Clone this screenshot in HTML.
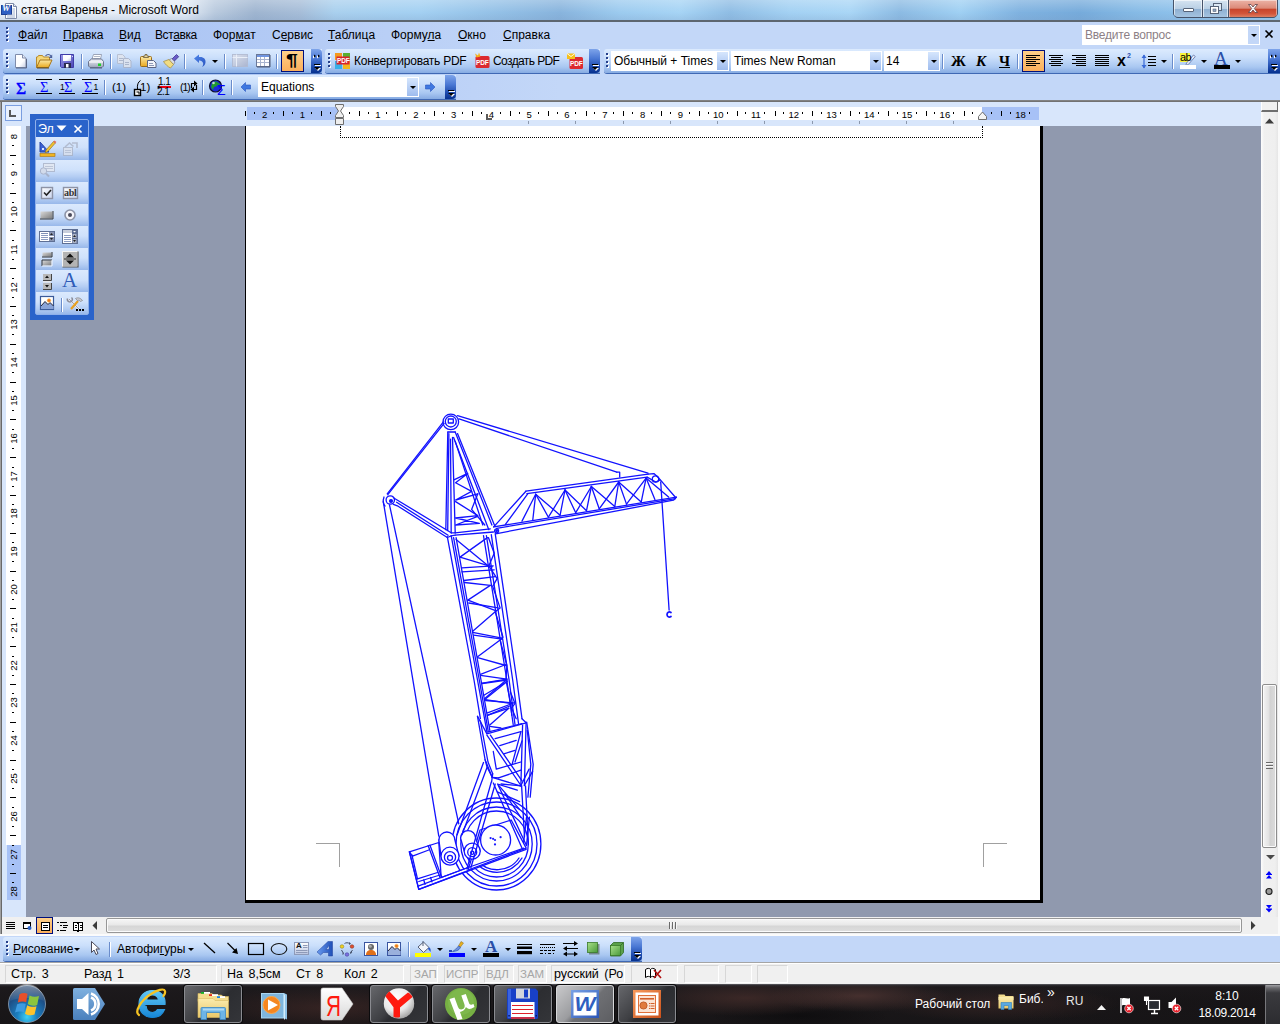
<!DOCTYPE html><html><head><meta charset="utf-8"><title>Word</title><style>
*{margin:0;padding:0;box-sizing:border-box}
html,body{width:1280px;height:1024px;overflow:hidden;background:#c3d7f8;font-family:"Liberation Sans",sans-serif;font-size:12px;color:#000}
.a{position:absolute}
.t{position:absolute;white-space:nowrap;line-height:14px;height:14px}
u{text-decoration:underline;text-underline-offset:1px}
.tb{position:absolute;height:25px;border-radius:3px 0 0 3px;background:linear-gradient(#dcebfe 0,#cbdffb 35%,#a9c7f1 75%,#86abe2 100%);box-shadow:0 1px 0 #3f68b4}
.cap{position:absolute;top:0;width:11px;height:25px;border-radius:0 4px 4px 0;background:linear-gradient(#7ea4ea 0,#4a78d4 40%,#1d4aac 75%,#06318f 100%)}
.grip{position:absolute;left:3px;top:4px;width:3px;height:16px;background:linear-gradient(#27408b 0 2px,transparent 2px 4px) 0 0/2px 4px repeat-y,linear-gradient(#fff 0 2px,transparent 2px 4px) 1px 1px/2px 4px repeat-y}
.sep{position:absolute;top:5px;width:2px;height:15px;border-left:1px solid #6a8ccb;border-right:1px solid #fff}
.cb{position:absolute;background:#fff;height:20px;top:2px}
.dd{position:absolute;top:1px;right:1px;width:11px;height:18px;background:linear-gradient(#d6e6fd,#9ebcee)}
.dd:after,.arr:after{content:"";position:absolute;left:3px;top:8px;border:3px solid transparent;border-top:3px solid #000;border-bottom:0;width:0;height:0}
.arr{position:absolute;width:7px;height:4px}
.arr:after{left:0;top:0}
.sel{position:absolute;background:linear-gradient(#fed08a,#fbaf5c);border:1px solid #00107c}
</style></head><body>
<div class="a" style="left:0;top:0;width:1280px;height:21px;background:linear-gradient(90deg,#edf2f9 0,#e4ecf6 185px,#b9cade 215px,#9fb5d0 255px,#a6bdd8 300px,#a9d0ee 335px,#a3d0f2 420px,#93c0e6 500px,#88b4dd 560px,#9ccbef 620px,#a6d4f5 680px,#8fbde4 730px,#a3d1f3 790px,#a9d6f6 850px,#8cbbe3 900px,#9fd0f3 960px,#7fb2e0 1020px,#76abdb 1080px,#86bbe6 1140px,#8cc0ea 1170px,#9ccdf1 1280px)"></div>
<div class="a" style="left:0;top:0;width:1280px;height:21px;background:linear-gradient(rgba(255,255,255,.25),rgba(255,255,255,0) 60%,rgba(120,150,190,.25))"></div>
<div class="a" style="left:0;top:20px;width:1280px;height:2px;background:#5d6670"></div>
<div class="t" style="left:21px;top:3px;font-size:12px">статья Варенья - Microsoft Word</div>
<svg class="a" style="left:1px;top:2px" width="17" height="18"><path d="M4.500 1.500h8l3 3v12h-11z" fill="#fff" stroke="#7c8aa8"/><path d="M12.500 1.500v3h3" fill="#dfe6f4" stroke="#7c8aa8"/><rect x="0.500" y="3.500" width="10" height="9" fill="#2f5fc4" stroke="#1c3f94"/><path d="M6 13h8M6 15h8M11.500 7h2.500M11.500 9h2.500M11.500 11h2.500" stroke="#9fb0d0" stroke-width="1"/></svg>
<div class="t" style="left:2px;top:4px;font:bold italic 9px 'Liberation Serif',serif;line-height:9px;height:9px;color:#fff">W</div>
<div class="a" style="left:1173px;top:-1px;width:105px;height:19px;border:1px solid #46536a;border-radius:0 0 5px 5px;background:#46536a;overflow:hidden"><div class="a" style="left:0;top:0;width:28px;height:18px;background:linear-gradient(#d6e4f1 0,#b9cfe4 48%,#8fb0d2 52%,#a8c6e2 100%);box-shadow:inset 0 0 0 1px rgba(255,255,255,.6)"></div><div class="a" style="left:29px;top:0;width:25px;height:18px;background:linear-gradient(#d6e4f1 0,#b9cfe4 48%,#8fb0d2 52%,#a8c6e2 100%);box-shadow:inset 0 0 0 1px rgba(255,255,255,.6)"></div><div class="a" style="left:55px;top:0;width:48px;height:18px;background:linear-gradient(#ecb3a6 0,#dc8a78 45%,#c8452c 52%,#d2553a 75%,#e08a6c 100%);box-shadow:inset 0 0 0 1px rgba(255,255,255,.45)"></div></div>
<svg class="a" style="left:1174px;top:0" width="104" height="18"><rect x="9.500" y="8.500" width="10" height="3" rx=".5" fill="#fff" stroke="#566378"/><rect x="39.500" y="3.500" width="8" height="7" fill="#dbe7f3" stroke="#566378"/><rect x="36.500" y="6.500" width="8" height="7" fill="#fff" stroke="#566378"/><rect x="39" y="9" width="3" height="2.500" fill="#8fa6c2" stroke="#566378" stroke-width=".6"/><path d="M74.500 4.500l2.500 0 2 2.500 2-2.500 2.500 0-3.200 4 3.200 4-2.500 0-2-2.500-2 2.500-2.500 0 3.200-4z" fill="#fff" stroke="#5a4048" stroke-width=".8"/></svg>
<div class="a" style="left:0;top:22px;width:1280px;height:79px;background:linear-gradient(90deg,#a4c0f3 0,#b4cbf5 300px,#c3d7f8 560px,#c3d7f8 100%)"></div>
<div class="a" style="left:0;top:100px;width:1280px;height:2px;background:linear-gradient(#8a8a8a,#6a6a6a)"></div>
<div class="a" style="left:0;top:102px;width:1280px;height:24px;background:#d8e6fb"></div>
<div class="a" style="left:0;top:126px;width:26px;height:791px;background:#d8e6fb"></div>
<div class="a" style="left:26px;top:126px;width:1235px;height:791px;background:#9099ae"></div>
<div class="a" style="left:245px;top:126px;width:798px;height:777px;background:#000"></div>
<div class="a" style="left:246px;top:126px;width:794px;height:774px;background:#fff"></div>
<div class="a" style="left:0;top:102px;width:2px;height:832px;background:linear-gradient(90deg,#a0a0a0 0 1px,#696969 1px 2px)"></div>
<div class="a" style="left:2px;top:917px;width:1278px;height:17px;background:#f0f0f0"></div>
<div class="a" style="left:1261px;top:102px;width:19px;height:832px;background:#f0f0f0"></div>
<div class="a" style="left:0;top:934px;width:1280px;height:2px;background:#fbfbfb"></div>
<div class="a" style="left:0;top:936px;width:1280px;height:26px;background:#c3d7f8"></div>
<div class="a" style="left:0;top:962px;width:1280px;height:1px;background:#a5a5a5"></div>
<div class="a" style="left:0;top:963px;width:1280px;height:21px;background:#f0f0f0"></div>
<div class="a" style="left:0;top:984px;width:1280px;height:40px;background:#121318"></div>
<div class="a" style="left:6px;top:27px;width:3px;height:16px"><div class="grip" style="left:0;top:0"></div></div>
<div class="t" style="left:18px;top:28px"><u>Ф</u>айл</div>
<div class="t" style="left:63px;top:28px"><u>П</u>равка</div>
<div class="t" style="left:119px;top:28px"><u>В</u>ид</div>
<div class="t" style="left:155px;top:28px"><span style="letter-spacing:-0.4px">Вст<u>а</u>вка</span></div>
<div class="t" style="left:213px;top:28px">Фор<u>м</u>ат</div>
<div class="t" style="left:272px;top:28px">С<u>е</u>рвис</div>
<div class="t" style="left:328px;top:28px"><u>Т</u>аблица</div>
<div class="t" style="left:391px;top:28px">Форму<u>л</u>а</div>
<div class="t" style="left:458px;top:28px"><u>О</u>кно</div>
<div class="t" style="left:503px;top:28px"><u>С</u>правка</div>
<div class="a" style="left:1082px;top:25px;width:178px;height:20px;background:#fff"><div class="dd" style="top:1px;right:1px;height:18px;background:#c3d7f8"></div></div>
<div class="t" style="left:1085px;top:28px;color:#8c7f86;letter-spacing:-0.2px">Введите вопрос</div>
<svg class="a" style="left:1264px;top:29px" width="10" height="10"><path d="M1.5 1.5l7 7M8.5 1.5l-7 7" stroke="#000" stroke-width="1.6" fill="none"/></svg>
<div class="tb" style="left:3px;top:49px;width:319px;height:24px"><div class="grip"></div><div class="cap" style="left:308px;height:24px"></div><div class="sep" style="left:78px"></div><div class="sep" style="left:107px"></div><div class="sep" style="left:181px"></div><div class="sep" style="left:221px"></div><div class="sep" style="left:273px"></div><div class="sel" style="left:278px;top:1px;width:23px;height:22px"></div><div class="arr" style="left:209px;top:11px"></div></div>
<div class="tb" style="left:325px;top:49px;width:275px;height:24px"><div class="grip"></div><div class="cap" style="left:264px;height:24px"></div></div>
<div class="t" style="left:354px;top:54px;letter-spacing:-0.25px">Конвертировать PDF</div>
<div class="t" style="left:493px;top:54px;letter-spacing:-0.6px">Создать PDF</div>
<div class="tb" style="left:604px;top:49px;width:676px;height:24px"><div class="grip" style="left:2px"></div><div class="cap" style="left:664px;width:12px;height:24px;border-radius:0"></div><div class="cb" style="left:7px;width:118px"><div class="dd"></div></div><div class="cb" style="left:127px;width:151px"><div class="dd"></div></div><div class="cb" style="left:280px;width:56px"><div class="dd"></div></div><div class="sep" style="left:338px"></div><div class="sep" style="left:413px"></div><div class="sep" style="left:568px"></div><div class="sel" style="left:418px;top:1px;width:23px;height:22px"></div><div class="arr" style="left:557px;top:11px"></div><div class="arr" style="left:597px;top:11px"></div><div class="arr" style="left:631px;top:11px"></div></div>
<div class="t" style="left:614px;top:54px;width:102px;overflow:hidden">Обычный + Times</div>
<div class="t" style="left:734px;top:54px">Times New Roman</div>
<div class="t" style="left:886px;top:54px">14</div>
<div class="t" style="left:951px;top:53px;font:bold 15px 'Liberation Serif',serif;line-height:16px">Ж</div>
<div class="t" style="left:976px;top:53px;font:italic bold 15px 'Liberation Serif',serif;line-height:16px">К</div>
<div class="t" style="left:999px;top:53px;font:bold 15px 'Liberation Serif',serif;line-height:16px;text-decoration:underline">Ч</div>
<div class="tb" style="left:3px;top:75px;width:453px;height:24px"><div class="grip"></div><div class="cap" style="left:442px;height:24px"></div><div class="sep" style="left:101px"></div><div class="sep" style="left:199px"></div><div class="sep" style="left:228px"></div><div class="cb" style="left:255px;width:161px"><div class="dd"></div></div></div>
<div class="t" style="left:261px;top:80px">Equations</div>
<div class="a" style="left:5px;top:105px;width:17px;height:16px;border:1px solid #7a9ee0;background:#e8f0fd"></div>
<svg class="a" style="left:9px;top:110px" width="9" height="9"><path d="M1 0v6h6" stroke="#585858" stroke-width="2" fill="none"/></svg>
<div class="a" style="left:247px;top:107px;width:792px;height:13px;background:#a7c1f6"></div>
<div class="a" style="left:340px;top:107px;width:642px;height:13px;background:#fff"></div>
<svg class="a" style="left:0;top:102px" width="1280" height="24" shape-rendering="crispEdges"><rect x="245" y="9" width="1" height="5" fill="#000"/><rect x="254" y="10" width="1" height="2" fill="#000"/><rect x="273" y="10" width="1" height="2" fill="#000"/><rect x="283" y="9" width="1" height="5" fill="#000"/><rect x="292" y="10" width="1" height="2" fill="#000"/><rect x="311" y="10" width="1" height="2" fill="#000"/><rect x="321" y="9" width="1" height="5" fill="#000"/><rect x="330" y="10" width="1" height="2" fill="#000"/><rect x="349" y="10" width="1" height="2" fill="#000"/><rect x="359" y="9" width="1" height="5" fill="#000"/><rect x="368" y="10" width="1" height="2" fill="#000"/><rect x="386" y="10" width="1" height="2" fill="#000"/><rect x="397" y="9" width="1" height="5" fill="#000"/><rect x="405" y="10" width="1" height="2" fill="#000"/><rect x="424" y="10" width="1" height="2" fill="#000"/><rect x="434" y="9" width="1" height="5" fill="#000"/><rect x="443" y="10" width="1" height="2" fill="#000"/><rect x="462" y="10" width="1" height="2" fill="#000"/><rect x="472" y="9" width="1" height="5" fill="#000"/><rect x="481" y="10" width="1" height="2" fill="#000"/><rect x="500" y="10" width="1" height="2" fill="#000"/><rect x="510" y="9" width="1" height="5" fill="#000"/><rect x="519" y="10" width="1" height="2" fill="#000"/><rect x="538" y="10" width="1" height="2" fill="#000"/><rect x="548" y="9" width="1" height="5" fill="#000"/><rect x="557" y="10" width="1" height="2" fill="#000"/><rect x="575" y="10" width="1" height="2" fill="#000"/><rect x="586" y="9" width="1" height="5" fill="#000"/><rect x="594" y="10" width="1" height="2" fill="#000"/><rect x="613" y="10" width="1" height="2" fill="#000"/><rect x="623" y="9" width="1" height="5" fill="#000"/><rect x="632" y="10" width="1" height="2" fill="#000"/><rect x="651" y="10" width="1" height="2" fill="#000"/><rect x="661" y="9" width="1" height="5" fill="#000"/><rect x="670" y="10" width="1" height="2" fill="#000"/><rect x="689" y="10" width="1" height="2" fill="#000"/><rect x="699" y="9" width="1" height="5" fill="#000"/><rect x="708" y="10" width="1" height="2" fill="#000"/><rect x="727" y="10" width="1" height="2" fill="#000"/><rect x="737" y="9" width="1" height="5" fill="#000"/><rect x="745" y="10" width="1" height="2" fill="#000"/><rect x="764" y="10" width="1" height="2" fill="#000"/><rect x="775" y="9" width="1" height="5" fill="#000"/><rect x="783" y="10" width="1" height="2" fill="#000"/><rect x="802" y="10" width="1" height="2" fill="#000"/><rect x="812" y="9" width="1" height="5" fill="#000"/><rect x="821" y="10" width="1" height="2" fill="#000"/><rect x="840" y="10" width="1" height="2" fill="#000"/><rect x="850" y="9" width="1" height="5" fill="#000"/><rect x="859" y="10" width="1" height="2" fill="#000"/><rect x="878" y="10" width="1" height="2" fill="#000"/><rect x="888" y="9" width="1" height="5" fill="#000"/><rect x="897" y="10" width="1" height="2" fill="#000"/><rect x="916" y="10" width="1" height="2" fill="#000"/><rect x="926" y="9" width="1" height="5" fill="#000"/><rect x="934" y="10" width="1" height="2" fill="#000"/><rect x="953" y="10" width="1" height="2" fill="#000"/><rect x="964" y="9" width="1" height="5" fill="#000"/><rect x="972" y="10" width="1" height="2" fill="#000"/><rect x="991" y="10" width="1" height="2" fill="#000"/><rect x="1001" y="9" width="1" height="5" fill="#000"/><rect x="1010" y="10" width="1" height="2" fill="#000"/><rect x="1029" y="10" width="1" height="2" fill="#000"/><rect x="528" y="19" width="1" height="3" fill="#8c98ad"/><rect x="575" y="19" width="1" height="3" fill="#8c98ad"/><rect x="623" y="19" width="1" height="3" fill="#8c98ad"/><rect x="670" y="19" width="1" height="3" fill="#8c98ad"/><rect x="717" y="19" width="1" height="3" fill="#8c98ad"/><rect x="764" y="19" width="1" height="3" fill="#8c98ad"/><rect x="812" y="19" width="1" height="3" fill="#8c98ad"/><rect x="859" y="19" width="1" height="3" fill="#8c98ad"/><rect x="906" y="19" width="1" height="3" fill="#8c98ad"/><rect x="953" y="19" width="1" height="3" fill="#8c98ad"/></svg>
<div class="t" style="left:254.6px;top:107.5px;width:20px;text-align:center;font-size:9.5px;line-height:13px;height:13px">2</div>
<div class="t" style="left:292.4px;top:107.5px;width:20px;text-align:center;font-size:9.5px;line-height:13px;height:13px">1</div>
<div class="t" style="left:368.0px;top:107.5px;width:20px;text-align:center;font-size:9.5px;line-height:13px;height:13px">1</div>
<div class="t" style="left:405.8px;top:107.5px;width:20px;text-align:center;font-size:9.5px;line-height:13px;height:13px">2</div>
<div class="t" style="left:443.6px;top:107.5px;width:20px;text-align:center;font-size:9.5px;line-height:13px;height:13px">3</div>
<div class="t" style="left:481.4px;top:107.5px;width:20px;text-align:center;font-size:9.5px;line-height:13px;height:13px">4</div>
<div class="t" style="left:519.2px;top:107.5px;width:20px;text-align:center;font-size:9.5px;line-height:13px;height:13px">5</div>
<div class="t" style="left:557.0px;top:107.5px;width:20px;text-align:center;font-size:9.5px;line-height:13px;height:13px">6</div>
<div class="t" style="left:594.8px;top:107.5px;width:20px;text-align:center;font-size:9.5px;line-height:13px;height:13px">7</div>
<div class="t" style="left:632.6px;top:107.5px;width:20px;text-align:center;font-size:9.5px;line-height:13px;height:13px">8</div>
<div class="t" style="left:670.4px;top:107.5px;width:20px;text-align:center;font-size:9.5px;line-height:13px;height:13px">9</div>
<div class="t" style="left:708.2px;top:107.5px;width:20px;text-align:center;font-size:9.5px;line-height:13px;height:13px">10</div>
<div class="t" style="left:745.9px;top:107.5px;width:20px;text-align:center;font-size:9.5px;line-height:13px;height:13px">11</div>
<div class="t" style="left:783.7px;top:107.5px;width:20px;text-align:center;font-size:9.5px;line-height:13px;height:13px">12</div>
<div class="t" style="left:821.5px;top:107.5px;width:20px;text-align:center;font-size:9.5px;line-height:13px;height:13px">13</div>
<div class="t" style="left:859.3px;top:107.5px;width:20px;text-align:center;font-size:9.5px;line-height:13px;height:13px">14</div>
<div class="t" style="left:897.1px;top:107.5px;width:20px;text-align:center;font-size:9.5px;line-height:13px;height:13px">15</div>
<div class="t" style="left:934.9px;top:107.5px;width:20px;text-align:center;font-size:9.5px;line-height:13px;height:13px">16</div>
<div class="t" style="left:1010.5px;top:107.5px;width:20px;text-align:center;font-size:9.5px;line-height:13px;height:13px">18</div>
<svg class="a" style="left:334px;top:103px" width="12" height="24"><path d="M1.5 1.5h8v2l-3 4.5 3 4.5v2h-8v-2l3-4.5-3-4.5z M1.5 15.5h8v6h-8z" fill="#eee" stroke="#6e6e6e" stroke-width="1"/></svg>
<svg class="a" style="left:977px;top:110px" width="12" height="12"><path d="M1.5 9.5v-3l4-4.5 4 4.5v3z" fill="#f4f4f4" stroke="#6e6e6e" stroke-width="1"/></svg>
<svg class="a" style="left:486px;top:114px" width="7" height="7"><path d="M1 0v5h5" stroke="#5a5a5a" stroke-width="2" fill="none"/></svg>
<div class="a" style="left:6px;top:126px;width:15px;height:719px;background:#fff"></div>
<div class="a" style="left:7px;top:845px;width:14px;height:55px;background:#a7c1f6"></div>
<svg class="a" style="left:0;top:126px" width="26" height="791" shape-rendering="crispEdges"><rect x="12" y="19" width="2" height="1" fill="#000"/><rect x="10" y="29" width="6" height="1" fill="#000"/><rect x="12" y="38" width="2" height="1" fill="#000"/><rect x="12" y="57" width="2" height="1" fill="#000"/><rect x="10" y="67" width="6" height="1" fill="#000"/><rect x="12" y="76" width="2" height="1" fill="#000"/><rect x="12" y="95" width="2" height="1" fill="#000"/><rect x="10" y="104" width="6" height="1" fill="#000"/><rect x="12" y="114" width="2" height="1" fill="#000"/><rect x="12" y="133" width="2" height="1" fill="#000"/><rect x="10" y="142" width="6" height="1" fill="#000"/><rect x="12" y="152" width="2" height="1" fill="#000"/><rect x="12" y="171" width="2" height="1" fill="#000"/><rect x="10" y="180" width="6" height="1" fill="#000"/><rect x="12" y="189" width="2" height="1" fill="#000"/><rect x="12" y="208" width="2" height="1" fill="#000"/><rect x="10" y="218" width="6" height="1" fill="#000"/><rect x="12" y="227" width="2" height="1" fill="#000"/><rect x="12" y="246" width="2" height="1" fill="#000"/><rect x="10" y="256" width="6" height="1" fill="#000"/><rect x="12" y="265" width="2" height="1" fill="#000"/><rect x="12" y="284" width="2" height="1" fill="#000"/><rect x="10" y="293" width="6" height="1" fill="#000"/><rect x="12" y="303" width="2" height="1" fill="#000"/><rect x="12" y="322" width="2" height="1" fill="#000"/><rect x="10" y="331" width="6" height="1" fill="#000"/><rect x="12" y="341" width="2" height="1" fill="#000"/><rect x="12" y="360" width="2" height="1" fill="#000"/><rect x="10" y="369" width="6" height="1" fill="#000"/><rect x="12" y="378" width="2" height="1" fill="#000"/><rect x="12" y="397" width="2" height="1" fill="#000"/><rect x="10" y="407" width="6" height="1" fill="#000"/><rect x="12" y="416" width="2" height="1" fill="#000"/><rect x="12" y="435" width="2" height="1" fill="#000"/><rect x="10" y="445" width="6" height="1" fill="#000"/><rect x="12" y="454" width="2" height="1" fill="#000"/><rect x="12" y="473" width="2" height="1" fill="#000"/><rect x="10" y="482" width="6" height="1" fill="#000"/><rect x="12" y="492" width="2" height="1" fill="#000"/><rect x="12" y="511" width="2" height="1" fill="#000"/><rect x="10" y="520" width="6" height="1" fill="#000"/><rect x="12" y="530" width="2" height="1" fill="#000"/><rect x="12" y="549" width="2" height="1" fill="#000"/><rect x="10" y="558" width="6" height="1" fill="#000"/><rect x="12" y="567" width="2" height="1" fill="#000"/><rect x="12" y="586" width="2" height="1" fill="#000"/><rect x="10" y="596" width="6" height="1" fill="#000"/><rect x="12" y="605" width="2" height="1" fill="#000"/><rect x="12" y="624" width="2" height="1" fill="#000"/><rect x="10" y="634" width="6" height="1" fill="#000"/><rect x="12" y="643" width="2" height="1" fill="#000"/><rect x="12" y="662" width="2" height="1" fill="#000"/><rect x="10" y="671" width="6" height="1" fill="#000"/><rect x="12" y="681" width="2" height="1" fill="#000"/><rect x="12" y="700" width="2" height="1" fill="#000"/><rect x="10" y="709" width="6" height="1" fill="#000"/><rect x="12" y="719" width="2" height="1" fill="#000"/><rect x="12" y="738" width="2" height="1" fill="#000"/><rect x="10" y="747" width="6" height="1" fill="#000"/><rect x="12" y="756" width="2" height="1" fill="#000"/></svg>
<div class="t" style="left:2.5px;top:129.5px;width:20px;height:13px;text-align:center;font-size:9.5px;line-height:13px;transform:rotate(-90deg)">8</div>
<div class="t" style="left:2.5px;top:167.3px;width:20px;height:13px;text-align:center;font-size:9.5px;line-height:13px;transform:rotate(-90deg)">9</div>
<div class="t" style="left:2.5px;top:205.1px;width:20px;height:13px;text-align:center;font-size:9.5px;line-height:13px;transform:rotate(-90deg)">10</div>
<div class="t" style="left:2.5px;top:242.8px;width:20px;height:13px;text-align:center;font-size:9.5px;line-height:13px;transform:rotate(-90deg)">11</div>
<div class="t" style="left:2.5px;top:280.6px;width:20px;height:13px;text-align:center;font-size:9.5px;line-height:13px;transform:rotate(-90deg)">12</div>
<div class="t" style="left:2.5px;top:318.4px;width:20px;height:13px;text-align:center;font-size:9.5px;line-height:13px;transform:rotate(-90deg)">13</div>
<div class="t" style="left:2.5px;top:356.2px;width:20px;height:13px;text-align:center;font-size:9.5px;line-height:13px;transform:rotate(-90deg)">14</div>
<div class="t" style="left:2.5px;top:394.0px;width:20px;height:13px;text-align:center;font-size:9.5px;line-height:13px;transform:rotate(-90deg)">15</div>
<div class="t" style="left:2.5px;top:431.8px;width:20px;height:13px;text-align:center;font-size:9.5px;line-height:13px;transform:rotate(-90deg)">16</div>
<div class="t" style="left:2.5px;top:469.6px;width:20px;height:13px;text-align:center;font-size:9.5px;line-height:13px;transform:rotate(-90deg)">17</div>
<div class="t" style="left:2.5px;top:507.4px;width:20px;height:13px;text-align:center;font-size:9.5px;line-height:13px;transform:rotate(-90deg)">18</div>
<div class="t" style="left:2.5px;top:545.2px;width:20px;height:13px;text-align:center;font-size:9.5px;line-height:13px;transform:rotate(-90deg)">19</div>
<div class="t" style="left:2.5px;top:583.0px;width:20px;height:13px;text-align:center;font-size:9.5px;line-height:13px;transform:rotate(-90deg)">20</div>
<div class="t" style="left:2.5px;top:620.8px;width:20px;height:13px;text-align:center;font-size:9.5px;line-height:13px;transform:rotate(-90deg)">21</div>
<div class="t" style="left:2.5px;top:658.6px;width:20px;height:13px;text-align:center;font-size:9.5px;line-height:13px;transform:rotate(-90deg)">22</div>
<div class="t" style="left:2.5px;top:696.4px;width:20px;height:13px;text-align:center;font-size:9.5px;line-height:13px;transform:rotate(-90deg)">23</div>
<div class="t" style="left:2.5px;top:734.2px;width:20px;height:13px;text-align:center;font-size:9.5px;line-height:13px;transform:rotate(-90deg)">24</div>
<div class="t" style="left:2.5px;top:772.0px;width:20px;height:13px;text-align:center;font-size:9.5px;line-height:13px;transform:rotate(-90deg)">25</div>
<div class="t" style="left:2.5px;top:809.8px;width:20px;height:13px;text-align:center;font-size:9.5px;line-height:13px;transform:rotate(-90deg)">26</div>
<div class="t" style="left:2.5px;top:847.6px;width:20px;height:13px;text-align:center;font-size:9.5px;line-height:13px;transform:rotate(-90deg)">27</div>
<div class="t" style="left:2.5px;top:885.4px;width:20px;height:13px;text-align:center;font-size:9.5px;line-height:13px;transform:rotate(-90deg)">28</div>
<div class="a" style="left:340px;top:126px;width:643px;height:12px;border:1px dotted #000;border-top:0"></div>
<div class="a" style="left:316px;top:843px;width:24px;height:24px;border-top:1px solid #a0a0a0;border-right:1px solid #a0a0a0"></div>
<div class="a" style="left:983px;top:843px;width:24px;height:24px;border-top:1px solid #a0a0a0;border-left:1px solid #a0a0a0"></div>
<div class="a" style="left:1261px;top:102px;width:17px;height:815px;background:linear-gradient(90deg,#fdfdfd 0,#f0f0f0 3px,#efefef 14px,#e6e6e6 100%)"></div>
<div class="a" style="left:1278px;top:102px;width:2px;height:832px;background:#fafafa"></div>
<div class="a" style="left:1261px;top:102px;width:17px;height:10px;background:#f0f0f0;border-right:1px solid #6e6e6e;border-bottom:2px solid #6e6e6e;border-left:1px solid #fff"></div>
<svg class="a" style="left:1265px;top:118px" width="9" height="6"><path d="M0 5.5L4.5 0.5 9 5.5z" fill="#3c3c3c"/></svg>
<div class="a" style="left:1262px;top:684px;width:15px;height:164px;border:1px solid #8d8d8d;border-radius:2px;background:linear-gradient(90deg,#f4f4f4 0,#e2e2e2 45%,#d2d2d2 55%,#dcdcdc 100%);box-shadow:inset 0 0 0 1px #fbfbfb"></div>
<div class="a" style="left:1266px;top:762px;width:7px;height:7px;background:repeating-linear-gradient(#6a6a6a 0 1px,#f6f6f6 1px 2px,transparent 2px 3px)"></div>
<svg class="a" style="left:1266px;top:855px" width="9" height="5"><path d="M0 0h9L4.5 4.5z" fill="#4a4a4a"/></svg>
<svg class="a" style="left:1264px;top:868px" width="12" height="48"><g fill="#00f"><path d="M2 6.5h6L5 3z M2 10.5h6L5 7z" /><rect x="2" y="6" width="6" height="1"/><path d="M2 37h6l-3 3.5z M2 41h6l-3 3.5z"/><rect x="2" y="40.5" width="6" height="1"/></g><circle cx="5" cy="23.500" r="3" fill="#9a9a9a" stroke="#222" stroke-width="1.2"/></svg>
<div class="sel" style="left:36px;top:917px;width:17px;height:17px"></div>
<svg class="a" style="left:2px;top:918px" width="100" height="18" shape-rendering="crispEdges"><g fill="#000"><rect x="4" y="4" width="9" height="1"/><rect x="4" y="6" width="9" height="1"/><rect x="4" y="8" width="9" height="1"/><rect x="4" y="10" width="9" height="1"/></g><rect x="21.500" y="4.500" width="7" height="6" fill="#fff" stroke="#000"/><rect x="21" y="4" width="8" height="2" fill="#000"/><circle cx="27.500" cy="10" r="2" fill="#2a62c8" shape-rendering="auto"/><rect x="39.500" y="4.500" width="8" height="8" rx="1" fill="#fff" stroke="#000"/><rect x="41" y="7" width="5" height="1" fill="#000"/><rect x="41" y="9" width="5" height="1" fill="#000"/><g fill="#000"><rect x="55" y="4" width="2" height="1"/><rect x="58" y="4" width="7" height="1"/><rect x="58" y="7" width="2" height="1"/><rect x="61" y="7" width="5" height="1"/><rect x="61" y="9" width="4" height="1"/><rect x="55" y="12" width="2" height="1"/><rect x="58" y="12" width="6" height="1"/></g><path d="M71.500 4.500h3.500l1 1 1-1h3.500v8h-3.500l-1 1-1-1h-3.500z" fill="#fff" stroke="#000"/><rect x="76" y="5" width="1" height="9" fill="#000"/><rect x="73" y="7" width="2" height="1" fill="#000"/><rect x="78" y="7" width="2" height="1" fill="#000"/><rect x="73" y="9" width="2" height="1" fill="#000"/><rect x="78" y="9" width="2" height="1" fill="#000"/></svg>
<svg class="a" style="left:92px;top:921px" width="6" height="9"><path d="M5 0v9L0.500 4.500z" fill="#3c3c3c"/></svg>
<svg class="a" style="left:1250px;top:921px" width="6" height="9"><path d="M1 0v9L5.500 4.500z" fill="#3c3c3c"/></svg>
<div class="a" style="left:106px;top:918px;width:1136px;height:15px;border:1px solid #979797;border-radius:2px;background:linear-gradient(#f6f6f6 0,#e9e9e9 45%,#d6d6d6 55%,#dedede 100%);box-shadow:inset 0 0 0 1px #fbfbfb"></div>
<div class="a" style="left:669px;top:922px;width:8px;height:7px;background:repeating-linear-gradient(90deg,#6a6a6a 0 1px,#f6f6f6 1px 2px,transparent 2px 3px)"></div>
<div class="tb" style="left:3px;top:937px;width:639px;height:24px"><div class="grip"></div><div class="cap" style="left:628px;height:24px"></div><div class="sep" style="left:106px"></div><div class="sep" style="left:405px"></div><div class="arr" style="left:71px;top:11px"></div><div class="arr" style="left:185px;top:11px"></div><div class="arr" style="left:434px;top:11px"></div><div class="arr" style="left:468px;top:11px"></div><div class="arr" style="left:502px;top:11px"></div></div>
<div class="t" style="left:13px;top:942px"><u>Р</u>исование</div>
<div class="t" style="left:117px;top:942px">Автофи<u>г</u>уры</div>
<div class="a" style="left:0;top:963px;width:1280px;height:1px;background:#fff"></div>
<div class="a" style="left:5px;top:965px;width:212px;height:18px;border:1px solid #d7d7d7;border-right-color:#fff;border-bottom-color:#fff;background:#f0f0f0"></div>
<div class="a" style="left:221px;top:965px;width:183px;height:18px;border:1px solid #d7d7d7;border-right-color:#fff;border-bottom-color:#fff;background:#f0f0f0"></div>
<div class="a" style="left:410px;top:965px;width:28px;height:18px;border:1px solid #d7d7d7;border-right-color:#fff;border-bottom-color:#fff;background:#f0f0f0"></div>
<div class="a" style="left:444px;top:965px;width:35px;height:18px;border:1px solid #d7d7d7;border-right-color:#fff;border-bottom-color:#fff;background:#f0f0f0"></div>
<div class="a" style="left:484px;top:965px;width:30px;height:18px;border:1px solid #d7d7d7;border-right-color:#fff;border-bottom-color:#fff;background:#f0f0f0"></div>
<div class="a" style="left:518px;top:965px;width:29px;height:18px;border:1px solid #d7d7d7;border-right-color:#fff;border-bottom-color:#fff;background:#f0f0f0"></div>
<div class="a" style="left:551px;top:965px;width:74px;height:18px;border:1px solid #d7d7d7;border-right-color:#fff;border-bottom-color:#fff;background:#f0f0f0"></div>
<div class="a" style="left:631px;top:965px;width:47px;height:18px;border:1px solid #d7d7d7;border-right-color:#fff;border-bottom-color:#fff;background:#f0f0f0"></div>
<div class="a" style="left:684px;top:965px;width:35px;height:18px;border:1px solid #d7d7d7;border-right-color:#fff;border-bottom-color:#fff;background:#f0f0f0"></div>
<div class="a" style="left:725px;top:965px;width:27px;height:18px;border:1px solid #d7d7d7;border-right-color:#fff;border-bottom-color:#fff;background:#f0f0f0"></div>
<div class="a" style="left:757px;top:965px;width:31px;height:18px;border:1px solid #d7d7d7;border-right-color:#fff;border-bottom-color:#fff;background:#f0f0f0"></div>
<div class="t" style="left:11px;top:967px;font-size:12.5px;color:#000;word-spacing:2px">Стр. 3</div>
<div class="t" style="left:84px;top:967px;font-size:12.5px;color:#000;word-spacing:2px">Разд 1</div>
<div class="t" style="left:173px;top:967px;font-size:12.5px;color:#000;word-spacing:2px">3/3</div>
<div class="t" style="left:227px;top:967px;font-size:12.5px;color:#000;word-spacing:2px">На 8,5см</div>
<div class="t" style="left:296px;top:967px;font-size:12.5px;color:#000;word-spacing:2px">Ст 8</div>
<div class="t" style="left:344px;top:967px;font-size:12.5px;color:#000;word-spacing:2px">Кол 2</div>
<div class="t" style="left:414px;top:967px;font-size:11.5px;color:#a6a6a6;word-spacing:2px">ЗАП</div>
<div class="t" style="left:446px;top:967px;font-size:11.5px;color:#a6a6a6;word-spacing:2px">ИСПР</div>
<div class="t" style="left:486px;top:967px;font-size:11.5px;color:#a6a6a6;word-spacing:2px">ВДЛ</div>
<div class="t" style="left:520px;top:967px;font-size:11.5px;color:#a6a6a6;word-spacing:2px">ЗАМ</div>
<div class="t" style="left:554px;top:967px;font-size:12.5px;color:#000;word-spacing:2px">русский (Ро</div>
<svg class="a" style="left:643px;top:966px" width="22" height="16"><path d="M2.500 3.500c2-1.500 4-1.500 5 0v8c-1-1.500-3-1.500-5 0z M7.500 3.500c1-1.500 3-1.500 5 0v8c-2-1.500-4-1.500-5 0z" fill="#fff" stroke="#000"/><path d="M11 4l7 8M18 4l-7 8" stroke="#b01010" stroke-width="1.6"/></svg>
<div class="a" style="left:0;top:984px;width:1280px;height:40px;background:linear-gradient(rgba(120,122,128,.9) 0,rgba(60,60,66,.5) 1px,rgba(30,30,34,0) 3px),radial-gradient(ellipse 130px 22px at 330px 24px,rgba(75,45,42,.55),transparent),radial-gradient(ellipse 110px 18px at 745px 14px,rgba(80,50,46,.6),transparent),radial-gradient(ellipse 90px 16px at 860px 12px,rgba(92,60,56,.65),transparent),radial-gradient(ellipse 120px 18px at 1000px 20px,rgba(70,44,42,.5),transparent),radial-gradient(ellipse 90px 14px at 800px 32px,rgba(8,8,10,.6),transparent),radial-gradient(ellipse 200px 30px at 1180px 20px,rgba(20,18,20,.5),transparent),linear-gradient(#1d1a1d 0,#1a1719 50%,#171517 100%)"></div>
<div class="a" style="left:184px;top:985px;width:58px;height:38px;border:1px solid #8a8b90;border-radius:3px;background:linear-gradient(135deg,#66676b 0,#3e3f43 45%,#2c2d31 55%,#343539 100%);box-shadow:0 0 0 1px #0b0b0d"></div>
<div class="a" style="left:370px;top:985px;width:58px;height:38px;border:1px solid #8a8b90;border-radius:3px;background:linear-gradient(135deg,#66676b 0,#3e3f43 45%,#2c2d31 55%,#343539 100%);box-shadow:0 0 0 1px #0b0b0d"></div>
<div class="a" style="left:432px;top:985px;width:58px;height:38px;border:1px solid #8a8b90;border-radius:3px;background:linear-gradient(135deg,#66676b 0,#3e3f43 45%,#2c2d31 55%,#343539 100%);box-shadow:0 0 0 1px #0b0b0d"></div>
<div class="a" style="left:494px;top:985px;width:58px;height:38px;border:1px solid #8a8b90;border-radius:3px;background:linear-gradient(135deg,#66676b 0,#3e3f43 45%,#2c2d31 55%,#343539 100%);box-shadow:0 0 0 1px #0b0b0d"></div>
<div class="a" style="left:556px;top:985px;width:58px;height:38px;border:1px solid #d8d8da;border-radius:3px;background:linear-gradient(135deg,#c9c9cb 0,#9b9c9f 45%,#6f7074 55%,#5d5e62 100%);box-shadow:0 0 0 1px #0b0b0d"></div>
<div class="a" style="left:618px;top:985px;width:58px;height:38px;border:1px solid #8a8b90;border-radius:3px;background:linear-gradient(135deg,#66676b 0,#3e3f43 45%,#2c2d31 55%,#343539 100%);box-shadow:0 0 0 1px #0b0b0d"></div>
<svg class="a" style="left:0;top:984px" width="1280" height="40" viewBox="0 984 1280 40"><defs><radialGradient id="orb" cx="50%" cy="85%" r="75%"><stop offset="0" stop-color="#3fd2f5"/><stop offset=".35" stop-color="#1b7fc0"/><stop offset=".8" stop-color="#1d4f86"/><stop offset="1" stop-color="#26466f"/></radialGradient><linearGradient id="orbhi" x1="0" y1="0" x2="0" y2="1"><stop offset="0" stop-color="#fff" stop-opacity=".75"/><stop offset="1" stop-color="#fff" stop-opacity=".1"/></linearGradient><linearGradient id="snd" x1="0" y1="0" x2="0" y2="1"><stop offset="0" stop-color="#7fb0df"/><stop offset="1" stop-color="#4a80bd"/></linearGradient><linearGradient id="ya" x1="0" y1="0" x2="0" y2="1"><stop offset="0" stop-color="#fff"/><stop offset="1" stop-color="#d9d9d9"/></linearGradient><radialGradient id="yb" cx="40%" cy="30%" r="75%"><stop offset="0" stop-color="#fff"/><stop offset=".6" stop-color="#e9e9e9"/><stop offset="1" stop-color="#9a9a9a"/></radialGradient><linearGradient id="fold" x1="0" y1="0" x2="0" y2="1"><stop offset="0" stop-color="#fbecae"/><stop offset="1" stop-color="#e9c769"/></linearGradient><linearGradient id="ie" x1="0" y1="0" x2="0" y2="1"><stop offset="0" stop-color="#62c8f6"/><stop offset="1" stop-color="#1686d6"/></linearGradient><linearGradient id="pp" x1="0" y1="0" x2="1" y2="1"><stop offset="0" stop-color="#f79a5c"/><stop offset="1" stop-color="#c9501a"/></linearGradient><linearGradient id="wd" x1="0" y1="0" x2="1" y2="1"><stop offset="0" stop-color="#7aa2e6"/><stop offset="1" stop-color="#2b55b5"/></linearGradient></defs><circle cx="27" cy="1004" r="18.500" fill="url(#orb)" stroke="#9fb3c8" stroke-opacity=".7" stroke-width="1"/><path d="M10 1001a17 17 0 0 1 34 0c-8-4-26-4-34 0z" fill="url(#orbhi)" opacity=".55"/><path d="M19.500 994.200c2.500-1.300 5.500-1.500 8-.4l-1.300 8.400c-2.600-1.200-5.600-1-8.400.3z" fill="#e8502a"/><path d="M29.500 995.500c3 1.600 6.500 1.800 9.500.6l-1.800 8.800c-3 1.400-6.400 1.200-9.400-.8z" fill="#8cc63e"/><path d="M17.200 1004.300c2.800-1.300 5.800-1.500 8.600-.5l-1.800 8.500c-2.800-1.200-6-1-9 .2z" fill="#3d9be0"/><path d="M27.200 1005.200c3 1.800 6.300 2 9.300 1l-2 8.300c-3 1.200-6.500 1-9.500-.8z" fill="#fcc32c"/><path d="M74.500 988h20.500l10 16-10 16h-20.500a1.500 1.500 0 0 1-1.500-1.500v-29a1.500 1.500 0 0 1 1.500-1.500z" fill="url(#snd)"/><path d="M77 999h5l6.500-6v22l-6.500-6h-5z" fill="#fff"/><path d="M91 997.500a7 7 0 0 1 0 13M91 993.500a11 11 0 0 1 0 21" stroke="#fff" stroke-width="2.600" fill="none"/><path d="M141.500 1004.500h23.500c.8-8-4.500-14-12.500-14-8 0-13.500 6-13.500 13.500s5.500 13.500 13.500 13.500c5.500 0 10-3 12-8h-7c-1 2-3 3-5 3-3.500 0-6-2.500-6.300-6z M146.500 1000c.5-3 2.800-5 6-5s5.500 2 6 5z" fill="url(#ie)" fill-rule="evenodd" stroke="url(#ie)" stroke-width="1.2"/><path d="M139 1015c-5-3 2-15 12-21 6-4 13-6 14-3 .5 1.500-.5 3.500-1.500 5" stroke="#f6c322" stroke-width="2.200" fill="none" stroke-linecap="round"/><path d="M198 993.500h14l1.500 1.500h8l1.500 1.500h5.500v5h-30.500z" fill="#f3dc8d" stroke="#d4b55a" stroke-width=".6"/><rect x="201" y="992" width="3" height="1.800" fill="#14b32a"/><rect x="204" y="992" width="6" height="1.800" fill="#fff"/><rect x="209" y="994.200" width="3" height="1.800" fill="#e0281e"/><rect x="212" y="994.200" width="6" height="1.800" fill="#fff"/><rect x="217" y="996.200" width="3" height="1.800" fill="#1c86e8"/><rect x="220" y="996.200" width="5" height="1.800" fill="#fff"/><path d="M198 998.500h15l2 2h13.500v17h-30.500z" fill="url(#fold)" stroke="#d9b95f" stroke-width=".6"/><path d="M202 1007.500h22.500a1 1 0 0 1 1 1v11h-5.500v-7h-13.500v7h-5.500v-11a1 1 0 0 1 1-1z" fill="#6db4e6" stroke="#3a88c6" stroke-width=".8"/><path d="M203 1008.500h21v2h-21z" fill="#bfe3f8" opacity=".8"/><path d="M264 993h20l3 1.500v25l-3-1.500h-22v-25z" fill="#8fc2e6"/><rect x="261.500" y="993.500" width="22" height="24.500" fill="#7fb5dc" stroke="#a9d4ef" stroke-width="1"/><rect x="284" y="994.500" width="1" height="25" fill="#d4ecfa"/><circle cx="271.500" cy="1005" r="8.500" fill="#f5861f"/><circle cx="271.500" cy="1005" r="8.500" fill="none" stroke="#f9a84e" stroke-width="1"/><path d="M268 999.500l10 5.500-10 5.500z" fill="#fff"/><path d="M323 988h19l11 16-11 16h-19a2 2 0 0 1-2-2v-28a2 2 0 0 1 2-2z" fill="url(#ya)" stroke="#cfcfcf" stroke-width=".6"/><text x="326" y="1015.500" font-family="Liberation Sans,sans-serif" font-size="30" fill="#ff1a0f" textLength="15" lengthAdjust="spacingAndGlyphs">Я</text><circle cx="399" cy="1003.500" r="15.200" fill="url(#yb)"/><path d="M385.500 996.500c1-2.500 2.500-4 4-5l8.500 9 10-8c2 1 3.500 2.500 4.500 4.500l-12.500 10.500v9.500c-2 .8-4.500.8-6.500-.3v-9.500z" fill="#ff1a10"/><circle cx="461" cy="1004" r="16" fill="#76b043"/><circle cx="461" cy="1002" r="13" fill="#86bf55" opacity=".5"/><path d="M449.500 999l5-1.500 3.500 9.500c1 2.500 3 3 5 2 1.800-1 2-3 1.300-5l-3-8.500 4.500-1.500 3.200 9c.5 1.500 1.500 2 3 1.500l1.500-.5 1 3-3 1.500c-2.500 1-4.500 0-5.500-1.500-1 2.500-3 4.500-6 5l2.500 7-5 1z" fill="#fff"/><path d="M508 988.500h27.500l2.500 2.500v26.500a1.500 1.500 0 0 1-1.500 1.500h-28a1.500 1.500 0 0 1-1.500-1.500v-27.500a1.500 1.500 0 0 1 1-1.500z" fill="#1840c8"/><path d="M508 989h3v29h-3z" fill="#3a63e0"/><rect x="516" y="988.500" width="14" height="10" fill="#d2d6dc"/><rect x="524" y="989.500" width="4" height="8" fill="#1840c8"/><rect x="511" y="1002" width="23.500" height="17" fill="#fff"/><rect x="512" y="1005" width="21" height="1" fill="#e0202a"/><rect x="512" y="1009" width="21" height="1" fill="#e0202a"/><rect x="512" y="1013" width="21" height="1" fill="#e0202a"/><rect x="511" y="1017" width="23.500" height="2" fill="#c8304a"/><rect x="508.300" y="1015" width="1.500" height="1.500" fill="#0a1a60"/><rect x="535.500" y="1015" width="1.500" height="1.500" fill="#0a1a60"/><rect x="571" y="990" width="28" height="28" fill="url(#wd)"/><rect x="573.500" y="992.500" width="23" height="23" fill="#fff"/><text x="574.500" y="1011" font-family="Liberation Sans,sans-serif" font-size="20" font-weight="bold" font-style="italic" fill="#2f5fc0" textLength="21" lengthAdjust="spacingAndGlyphs">W</text><rect x="633" y="990" width="28" height="28" fill="url(#pp)"/><rect x="635.500" y="992.500" width="23" height="23" fill="#fff"/><rect x="638.500" y="995.500" width="17" height="17" fill="#fbe3d3" stroke="#e0703a" stroke-width="1"/><rect x="640" y="998" width="14" height="1.600" fill="#d2602c"/><circle cx="643.500" cy="1005.500" r="3.600" fill="#e07a3c" stroke="#b8501c" stroke-width=".8"/><rect x="649" y="1003" width="1.500" height="1" fill="#d2602c"/><rect x="651" y="1003" width="3.500" height="1" fill="#d2602c"/><rect x="649" y="1005.500" width="1.500" height="1" fill="#d2602c"/><rect x="651" y="1005.500" width="3.500" height="1" fill="#d2602c"/><rect x="649" y="1008" width="1.500" height="1" fill="#d2602c"/><rect x="651" y="1008" width="3.500" height="1" fill="#d2602c"/><path d="M998.500 994.500h6l1 1.500h8v4h-15z" fill="#f3dc8d"/><path d="M998.500 997h15v11.500h-15z" fill="url(#fold)"/><path d="M1001 1002.500h10.500v7h-3v-4h-4.500v4h-3z" fill="#5aa8e0" stroke="#2f7fc0" stroke-width=".6"/><path d="M1097 1010l4.500-5 4.500 5z" fill="#f4f4f4"/><path d="M1121 998v15" stroke="#fff" stroke-width="1.400"/><path d="M1122 998.500c3-1.500 5 1 8-.5v7c-3 1.500-5-1-8 .5z" fill="#fff"/><circle cx="1129" cy="1008.500" r="4.300" fill="#e8202a" stroke="#fff" stroke-width=".6"/><path d="M1127.300 1006.800l3.400 3.400M1130.700 1006.800l-3.400 3.400" stroke="#fff" stroke-width="1.300"/><rect x="1148.500" y="1000.500" width="11" height="9" fill="#2a2d33" stroke="#fff" stroke-width="1.200"/><path d="M1151 1013.500h7M1154.500 1010v3.500" stroke="#fff" stroke-width="1.400"/><path d="M1146.500 997v8M1144.500 997h4v3.500h-4z" stroke="#fff" stroke-width="1.100" fill="#fff"/><path d="M1168.500 1002h3l4.500-4.500v15l-4.500-4.500h-3z" fill="#fff"/><circle cx="1176.500" cy="1008.500" r="4.300" fill="#e8202a" stroke="#fff" stroke-width=".6"/><path d="M1174.800 1006.800l3.400 3.400M1178.200 1006.800l-3.400 3.400" stroke="#fff" stroke-width="1.300"/></svg>
<div class="t" style="left:915px;top:997px;color:#fff;font-size:12px">Рабочий стол</div>
<div class="t" style="left:1019px;top:992px;color:#fff;font-size:12px;width:24px;overflow:hidden">Биб.</div>
<div class="t" style="left:1047px;top:985px;color:#fff;font-size:14px">»</div>
<div class="t" style="left:1066px;top:994px;color:#e8e8e8;font-size:12px">RU</div>
<div class="t" style="left:1196px;top:989px;width:62px;text-align:center;color:#fff;font-size:12px">8:10</div>
<div class="t" style="left:1196px;top:1006px;width:62px;text-align:center;color:#fff;font-size:12px;letter-spacing:-0.3px">18.09.2014</div>
<div class="a" style="left:1265px;top:985px;width:15px;height:39px;border-left:1px solid #77777b;background:linear-gradient(#a2a2a6 0,#6a6a6e 3px,#3a3a3e 8px,#2c2c30 100%)"></div>
<div class="a" style="left:30px;top:114px;width:64px;height:206px;background:#2a63ca"></div>
<div class="a" style="left:35px;top:119px;width:54px;height:196px;border:1px solid #8fb0ea;border-radius:2px;background:#2a63ca"></div>
<div class="a" style="left:36px;top:137px;width:52px;height:23px;background:linear-gradient(#dbe9fd 0,#cfe1fb 45%,#b4cdf3 75%,#98b8ea 100%)"></div>
<div class="a" style="left:36px;top:160px;width:52px;height:22px;background:linear-gradient(#dbe9fd 0,#cfe1fb 45%,#b4cdf3 75%,#98b8ea 100%)"></div>
<div class="a" style="left:36px;top:182px;width:52px;height:22px;background:linear-gradient(#dbe9fd 0,#cfe1fb 45%,#b4cdf3 75%,#98b8ea 100%)"></div>
<div class="a" style="left:36px;top:204px;width:52px;height:22px;background:linear-gradient(#dbe9fd 0,#cfe1fb 45%,#b4cdf3 75%,#98b8ea 100%)"></div>
<div class="a" style="left:36px;top:226px;width:52px;height:22px;background:linear-gradient(#dbe9fd 0,#cfe1fb 45%,#b4cdf3 75%,#98b8ea 100%)"></div>
<div class="a" style="left:36px;top:248px;width:52px;height:22px;background:linear-gradient(#dbe9fd 0,#cfe1fb 45%,#b4cdf3 75%,#98b8ea 100%)"></div>
<div class="a" style="left:36px;top:270px;width:52px;height:22px;background:linear-gradient(#dbe9fd 0,#cfe1fb 45%,#b4cdf3 75%,#98b8ea 100%)"></div>
<div class="a" style="left:36px;top:292px;width:52px;height:22px;background:linear-gradient(#dbe9fd 0,#cfe1fb 45%,#b4cdf3 75%,#98b8ea 100%)"></div>
<div class="t" style="left:38px;top:122px;color:#fff;font-size:12.5px">Эл</div>
<svg class="a" style="left:56px;top:125px" width="12" height="7"><path d="M0.500 0.500h10l-5 5.500z" fill="#fff"/></svg>
<svg class="a" style="left:73px;top:124px" width="11" height="10"><path d="M1.500 1.500l7 7M8.500 1.500l-7 7" stroke="#fff" stroke-width="1.700" fill="none"/></svg>
<svg class="a" style="left:30px;top:114px" width="64" height="206" viewBox="30 114 64 206"><defs><linearGradient id="gbtn" x1="0" y1="0" x2="1" y2="1"><stop offset="0" stop-color="#d9d9d9"/><stop offset="1" stop-color="#7c7c7c"/></linearGradient><linearGradient id="gwh" x1="0" y1="0" x2="1" y2="1"><stop offset="0" stop-color="#fff"/><stop offset="1" stop-color="#c9d4ee"/></linearGradient></defs><path d="M40 142v10h9z" fill="#3b62d6" stroke="#2745a8" stroke-width="1"/><rect x="42" y="148" width="2" height="2" fill="#dbe9fd"/><path d="M46 150l7.500-8.500 1.800 1.600-7.500 8.500-2.500 1z" fill="#f2c230" stroke="#8a6a14" stroke-width=".6"/><path d="M53.300 141.700l1.300-1.200 1.800 1.600-1.200 1.300z" fill="#e07060"/><rect x="40" y="153.500" width="15" height="3" fill="#f0b422" stroke="#a87410" stroke-width=".6"/><g opacity=".75"><rect x="63.500" y="147.500" width="9" height="8" fill="#dfe3ec" stroke="#a9b0c2"/><path d="M65 147l4.500-4 4 3.500M72 143h5v5" fill="none" stroke="#a9b0c2" stroke-width="1.600"/><rect x="65" y="150" width="6" height="1" fill="#b8bece"/><rect x="65" y="152" width="6" height="1" fill="#b8bece"/></g><g opacity=".8"><rect x="43.500" y="163.500" width="11" height="8" fill="#e4e8f0" stroke="#aab2c6"/><rect x="45" y="166" width="8" height="1" fill="#b8bece"/><rect x="45" y="168" width="8" height="1" fill="#b8bece"/><circle cx="43.500" cy="171" r="3.200" fill="#d5dbe8" stroke="#a4acc2"/><path d="M46 173.500l3 3" stroke="#a4acc2" stroke-width="2"/></g><rect x="41.500" y="187.500" width="11" height="11" fill="url(#gwh)" stroke="#8d93a6" stroke-width="1.400"/><path d="M44 192.500l2.500 2.500 4.500-5" stroke="#222" stroke-width="1.600" fill="none"/><rect x="63.500" y="187.500" width="14" height="11" fill="url(#gwh)" stroke="#8d93a6" stroke-width="1.400"/><rect x="40.500" y="211.500" width="12" height="7" fill="url(#gbtn)"/><path d="M40 219h13v-8" stroke="#3a3a3a" stroke-width="1" fill="none"/><circle cx="70" cy="215" r="5" fill="#f4f4fa" stroke="#8d93a6" stroke-width="1.600"/><circle cx="70" cy="215" r="2" fill="#4a4a5a"/><rect x="39.500" y="231.500" width="15" height="10" fill="#fff" stroke="#5e6f94"/><rect x="49" y="232" width="5" height="9" fill="#8a96b4"/><rect x="49" y="236" width="5" height="1" fill="#fff"/><path d="M50 235l1.500-2 1.500 2z M50 238l1.500 2 1.500-2z" fill="#222"/><rect x="41" y="233" width="7" height="1" fill="#7f90b8" shape-rendering="crispEdges"/><rect x="41" y="235" width="7" height="1" fill="#8a9ac0" shape-rendering="crispEdges"/><rect x="41" y="237" width="7" height="1" fill="#8a9ac0" shape-rendering="crispEdges"/><rect x="41" y="239" width="7" height="1" fill="#8a9ac0" shape-rendering="crispEdges"/><rect x="62.500" y="229.500" width="15" height="14" fill="#fff" stroke="#5e6f94"/><rect x="63" y="230" width="9" height="3" fill="#c8cedc"/><rect x="72" y="230" width="5" height="13" fill="#5e6f94"/><path d="M73 231l1.500 1.500 1.500-1.500z" fill="#fff"/><rect x="72.500" y="234" width="4" height="4" fill="#aab2c6"/><rect x="72.500" y="239" width="4" height="4" fill="#aab2c6"/><path d="M73 237l1.500-2 1.500 2z M73 240l1.500 2 1.500-2z" fill="#222"/><rect x="64" y="235" width="7" height="1" fill="#8a9ac0" shape-rendering="crispEdges"/><rect x="64" y="237" width="7" height="1" fill="#8a9ac0" shape-rendering="crispEdges"/><rect x="64" y="239" width="7" height="1" fill="#8a9ac0" shape-rendering="crispEdges"/><rect x="64" y="241" width="7" height="1" fill="#8a9ac0" shape-rendering="crispEdges"/><rect x="42.500" y="252.500" width="9" height="4" fill="url(#gbtn)"/><path d="M42 257h10v-5" stroke="#333" fill="none"/><rect x="42.500" y="260.500" width="9" height="5" fill="url(#gbtn)"/><path d="M52 260h-10v6" stroke="#333" fill="none"/><path d="M42 266h10v-6" stroke="#fff" fill="none" opacity=".8"/><rect x="62.500" y="251.500" width="15" height="15" fill="#b4b4b4" stroke="#f4f4f4"/><path d="M62.500 267h15.500v-15.500" stroke="#555" stroke-width="1.200" fill="none"/><path d="M66 257.500h8l-4-4z M66 260.500h8l-4 4z" fill="#111"/><rect x="64" y="258.500" width="12" height="1" fill="#333"/><rect x="43" y="274" width="8" height="6" fill="#b8b8b8"/><path d="M43 280.500h8.500v-6.500" stroke="#444" fill="none"/><path d="M45 278h4l-2-2.500z" fill="#111"/><rect x="43" y="283" width="8" height="6" fill="#b8b8b8"/><path d="M43 289.500h8.500v-6.500" stroke="#444" fill="none"/><path d="M45 285h4l-2 2.500z" fill="#111"/><rect x="43" y="281" width="8" height="1.500" fill="#e8e8e8"/><rect x="40.500" y="296.500" width="13" height="13" fill="#fff" stroke="#3a5a9a" stroke-width="1.200"/><path d="M41 309v-3l4-4.500 3 3 2-2 3.500 3.500v3z" fill="#8aa4d8"/><path d="M41 306l4-4.500 3 3 2-2 3.500 3.500" stroke="#223" stroke-width="1" fill="none"/><circle cx="49" cy="300.500" r="1.800" fill="#f07a1a" stroke="#f8c060" stroke-width=".6"/><rect x="61" y="298" width="1" height="14" fill="#6a8ccb"/><rect x="62" y="298" width="1" height="14" fill="#fff"/><path d="M69 299l10 10" stroke="#e8e8ee" stroke-width="2.400"/><path d="M69 299l10 10" stroke="#8a8a96" stroke-width=".8" fill="none"/><path d="M67.500 298.500a2.500 2.500 0 1 0 4-1" stroke="#8a8a96" stroke-width="1.400" fill="none"/><path d="M71 309l7-8" stroke="#e8a020" stroke-width="2.200"/><path d="M75.500 298.500c2.500-1.500 5-.5 7 2l-2 1c-1-1.200-2-1.500-3-1z" fill="#c8c8d0" stroke="#777" stroke-width=".6"/><rect x="76" y="309" width="2" height="2" fill="#000"/><rect x="79" y="309" width="2" height="2" fill="#000"/><rect x="82" y="309" width="2" height="2" fill="#000"/></svg>
<div class="t" style="left:64px;top:187px;font:bold 10px 'Liberation Serif',serif;line-height:12px;color:#333;letter-spacing:-0.3px">abl</div>
<div class="t" style="left:62px;top:268px;font:21px 'Liberation Serif',serif;line-height:24px;height:24px;color:#2f5cb8">A</div>
<svg class="a" style="left:0;top:48px" width="1280" height="54" viewBox="0 48 1280 54"><defs><linearGradient id="pg" x1="0" y1="0" x2="1" y2="1"><stop offset="0" stop-color="#fff"/><stop offset=".6" stop-color="#fdfdff"/><stop offset="1" stop-color="#c3cbe0"/></linearGradient><linearGradient id="fy" x1="0" y1="0" x2="0" y2="1"><stop offset="0" stop-color="#fbe9a6"/><stop offset="1" stop-color="#e9a91f"/></linearGradient><linearGradient id="sv" x1="0" y1="0" x2="1" y2="1"><stop offset="0" stop-color="#9a98ea"/><stop offset="1" stop-color="#4a46b4"/></linearGradient><linearGradient id="pr" x1="0" y1="0" x2="0" y2="1"><stop offset="0" stop-color="#f4f6fa"/><stop offset="1" stop-color="#9aa3b8"/></linearGradient><linearGradient id="un" x1="0" y1="0" x2="1" y2="1"><stop offset="0" stop-color="#4f86ea"/><stop offset="1" stop-color="#2a55c0"/></linearGradient><linearGradient id="tg" x1="0" y1="0" x2="1" y2="1"><stop offset="0" stop-color="#dfe3ee"/><stop offset="1" stop-color="#aab3cc"/></linearGradient><linearGradient id="capg" x1="0" y1="0" x2="0" y2="1"><stop offset="0" stop-color="#7ea4ea"/><stop offset="1" stop-color="#06318f"/></linearGradient></defs><path d="M15.500 54.500h7l3.500 3.500v9.500h-10.500z" fill="url(#pg)" stroke="#7f8cab" stroke-width="1"/><path d="M22.500 54.500v3.500h3.500" fill="#e8ecf6" stroke="#7f8cab" stroke-width="1"/><path d="M16 68h10.500v-9" stroke="#5b6684" stroke-width="1" fill="none"/><path d="M36.500 67.500v-10.500h1l1-1.500h4l1 1.500h6v3" fill="#f4d77a" stroke="#b88a2a" stroke-width="1"/><path d="M36.500 67.500l3.500-7.500h12l-3.500 7.500z" fill="url(#fy)" stroke="#a8761a" stroke-width="1"/><path d="M37 68h12" stroke="#5a4a2a" stroke-width="1"/><path d="M45.500 56c1.500-2 4-2 5.500 0" stroke="#4a5f9a" stroke-width="1.200" fill="none"/><path d="M52.200 54.500v3.500h-3.500z" fill="#4a5f9a"/><path d="M60.500 54.500h13v13h-12l-1-1z" fill="url(#sv)" stroke="#3f3ca8" stroke-width="1"/><rect x="63" y="55" width="8" height="6" fill="url(#pg)"/><rect x="64" y="63" width="7" height="5" fill="#2b2b50"/><rect x="66" y="64" width="2.500" height="3.500" fill="#fff"/><rect x="72" y="56" width="1" height="1" fill="#d8d8ff"/><path d="M92 59l1.500-4.500h8l-1 4.500z" fill="#fff" stroke="#8890a6" stroke-width=".8"/><path d="M94 56.500h6M93.500 58.500h6" stroke="#a0a8ba" stroke-width=".8"/><path d="M88.500 61.500l3-2.500h10l2 2.500v4.500l-1.500 1.500h-12l-1.500-1.500z" fill="url(#pr)" stroke="#6d7690" stroke-width="1"/><path d="M89 62h14" stroke="#fff" stroke-width="1"/><rect x="98" y="63.500" width="3" height="2.500" fill="#1fd02a"/><path d="M90 68h12" stroke="#55607a" stroke-width="1"/><g opacity=".85"><path d="M117.500 54.500h5l2.500 2.500v6.500h-7.500z" fill="#e1e5ee" stroke="#b5bccd" stroke-width="1"/><path d="M123.500 58.500h5l2.500 2.500v6.500h-7.500z" fill="#e1e5ee" stroke="#aab2c6" stroke-width="1"/><path d="M119 58.500h4M119 60.500h4M125 62.500h4M125 64.500h4" stroke="#aab2c6" stroke-width="1"/></g><rect x="140.500" y="56.500" width="11" height="10" rx="1" fill="url(#fy)" stroke="#9a6c1a" stroke-width="1"/><path d="M143.500 57.500v-1.500h1.500v-1.500h2v1.500h1.500v1.500z" fill="#e8d8a0" stroke="#6a5a3a" stroke-width=".8"/><path d="M147.500 60.500h6l2.500 2.500v4.500h-8.500z" fill="#f4f6fb" stroke="#5b6684" stroke-width="1"/><path d="M149 63.500h4M149 65.500h5" stroke="#8f9ab6" stroke-width="1"/><path d="M171.500 59.500l5-5 2.200 2.200-5 5z" fill="#6a5cc8" stroke="#3f3790" stroke-width=".8"/><path d="M169 60l2.500-1.500 3.500 3.500-1.500 2.500z" fill="#d8dbe6" stroke="#7a8096" stroke-width=".8"/><path d="M163.500 61.500l5.500-2 4.500 5-3 3.500c-2.500-1-5.500-4-7-6.500z" fill="#f1dc82" stroke="#a89248" stroke-width=".8"/><path d="M194 58.500l5-4v2.500c4.500-.5 7 2 6.500 5.500-.3 2-1.500 3.500-3.500 4.500 1.500-2 1.800-4 0-5.500-1-.8-2-.9-3-.9v2.400z" fill="url(#un)"/><g opacity=".9"><rect x="232.500" y="54.500" width="15" height="12" fill="url(#tg)" stroke="#b2bad0"/><path d="M232.500 57.500h15M236.500 54.500v12" stroke="#eef1f8" stroke-width="1"/></g><rect x="256.500" y="54.500" width="13" height="12" fill="#fff" stroke="#6b7897"/><rect x="257" y="55" width="12" height="2" fill="#6f94e0"/><path d="M257 59.500h12M257 62.500h12M260.500 57v9M264.500 57v9" stroke="#a9b4cf" stroke-width="1"/><path d="M257 67h13v-12" stroke="#4d5875" stroke-width="1" fill="none"/><path d="M313 55.500l2 1.500-2 1.500z M317 55.500l2 1.500-2 1.500z" fill="#fff"/><path d="M314 54.500l2 1.500-2 1.500z M318 54.500l2 1.500-2 1.500z" fill="#000"/><rect x="314" y="64" width="6" height="1" fill="#000"/><rect x="315" y="65" width="6" height="1" fill="#fff"/><path d="M315 68h6l-3 3z" fill="#fff"/><path d="M314 67h6l-3 3z" fill="#000"/><path d="M1270 55.500l2 1.500-2 1.500z M1274 55.500l2 1.500-2 1.500z" fill="#fff"/><path d="M1271 54.500l2 1.500-2 1.500z M1275 54.500l2 1.500-2 1.500z" fill="#000"/><rect x="1271" y="64" width="6" height="1" fill="#000"/><rect x="1272" y="65" width="6" height="1" fill="#fff"/><path d="M1272 68h6l-3 3z" fill="#fff"/><path d="M1271 67h6l-3 3z" fill="#000"/><rect x="592" y="64" width="6" height="1" fill="#000"/><rect x="593" y="65" width="6" height="1" fill="#fff"/><path d="M593 68h6l-3 3z" fill="#fff"/><path d="M592 67h6l-3 3z" fill="#000"/><rect x="448" y="90" width="6" height="1" fill="#000"/><rect x="449" y="91" width="6" height="1" fill="#fff"/><path d="M449 94h6l-3 3z" fill="#fff"/><path d="M448 93h6l-3 3z" fill="#000"/><rect x="36" y="79" width="16" height="1" fill="#000"/><rect x="36" y="93" width="16" height="1" fill="#000"/><rect x="59" y="79" width="16" height="1" fill="#000"/><rect x="59" y="93" width="16" height="1" fill="#000"/><rect x="82" y="79" width="16" height="1" fill="#000"/><rect x="82" y="93" width="16" height="1" fill="#000"/><path d="M137.500 89c-.5-4 .5-7 3-8.500" stroke="#000" stroke-width="1" fill="none"/><rect x="134.500" y="89.500" width="6" height="6" fill="#fff" stroke="#000" stroke-width="1.400"/><path d="M136.500 92h2.500v2.500" stroke="#000" stroke-width="1" fill="none"/><rect x="158" y="86" width="13" height="2" fill="#f00010"/><path d="M157 87l2.500-2v4z" fill="#000"/><path d="M191.500 88v-4.500h3M196.500 85v4.500h-3" stroke="#000" stroke-width="1.200" fill="none"/><path d="M194 80.500l3.500 3-3.500 3z M194 86.500l-3.500 3 3.500 3z" fill="#000"/><circle cx="215.500" cy="86" r="6" fill="#1a2ad8" stroke="#101030" stroke-width="1.200"/><path d="M212 83c2-2 5-2 6 0l-1 3-3 1-1 3-2-3z" fill="#1f9a30"/><path d="M217 82.500c1.500 0 2.500 1 3 2.500l-2 1z" fill="#1f9a30"/><circle cx="213.500" cy="83" r="1.300" fill="#e8e8ff" opacity=".8"/><path d="M241 87l4.500-4.500v2.500h5v4h-5v2.500z" fill="#3f78e0" stroke="#2a55c0" stroke-width=".6"/><path d="M435 87l-4.500-4.500v2.500h-5v4h5v2.500z" fill="#3f78e0" stroke="#2a55c0" stroke-width=".6"/><rect x="335" y="53" width="7" height="7" fill="#f39a1e"/><rect x="343" y="53" width="7" height="7" fill="#58b030"/><rect x="335" y="61" width="7" height="8" fill="#39b0e8"/><rect x="343" y="61" width="7" height="8" fill="#f2b81e"/><rect x="336.500" y="56.500" width="13" height="8" fill="#d8242c"/><rect x="475.500" y="56" width="14" height="12" rx="1.500" fill="#dc2a30"/><path d="M475 53.500l3 2 1-3 1.500 4-4 1z" fill="#f6b21a"/><rect x="569.500" y="57" width="13.500" height="12" rx="1.500" fill="#dc2a30"/><rect x="567" y="53.500" width="8" height="5.500" fill="#f6c01a"/><path d="M567 53.500l4 3 4-3" stroke="#fff" stroke-width=".9" fill="none"/><rect x="1026" y="55" width="14" height="1" fill="#000"/><rect x="1026" y="57" width="10" height="1" fill="#000"/><rect x="1026" y="59" width="14" height="1" fill="#000"/><rect x="1026" y="61" width="10" height="1" fill="#000"/><rect x="1026" y="63" width="14" height="1" fill="#000"/><rect x="1026" y="65" width="10" height="1" fill="#000"/><rect x="1049.0" y="55" width="14" height="1" fill="#000"/><rect x="1051.0" y="57" width="10" height="1" fill="#000"/><rect x="1049.0" y="59" width="14" height="1" fill="#000"/><rect x="1051.0" y="61" width="10" height="1" fill="#000"/><rect x="1049.0" y="63" width="14" height="1" fill="#000"/><rect x="1051.0" y="65" width="10" height="1" fill="#000"/><rect x="1072" y="55" width="14" height="1" fill="#000"/><rect x="1076" y="57" width="10" height="1" fill="#000"/><rect x="1072" y="59" width="14" height="1" fill="#000"/><rect x="1076" y="61" width="10" height="1" fill="#000"/><rect x="1072" y="63" width="14" height="1" fill="#000"/><rect x="1076" y="65" width="10" height="1" fill="#000"/><rect x="1095" y="55" width="14" height="1" fill="#000"/><rect x="1095" y="57" width="14" height="1" fill="#000"/><rect x="1095" y="59" width="14" height="1" fill="#000"/><rect x="1095" y="61" width="14" height="1" fill="#000"/><rect x="1095" y="63" width="14" height="1" fill="#000"/><rect x="1095" y="65" width="14" height="1" fill="#000"/><path d="M1144 55v13" stroke="#3a6ad8" stroke-width="1.200"/><path d="M1141.500 58l2.500-3.500 2.500 3.500z M1141.500 65l2.500 3.500 2.500-3.500z" fill="#3a6ad8"/><rect x="1148" y="56" width="8" height="1" fill="#000"/><rect x="1148" y="59" width="8" height="1" fill="#000"/><rect x="1148" y="62" width="8" height="1" fill="#000"/><rect x="1148" y="65" width="8" height="1" fill="#000"/><rect x="1180" y="53" width="10" height="9" fill="#f8f43a"/><path d="M1186.500 63l7-8 1.800 1.500-7 8-2.500 1z" fill="#e8ecf8" stroke="#4a5f9a" stroke-width=".7"/><rect x="1180" y="65" width="16" height="4" fill="#fff"/><rect x="1214" y="65" width="16" height="4" fill="#000"/></svg>
<div class="t" style="left:286px;top:51px;font:bold 17px 'Liberation Sans',sans-serif;line-height:20px;height:20px;transform:scaleX(1.25);transform-origin:0 0">¶</div>
<div class="t" style="left:16px;top:77px;font:17.5px 'Liberation Serif',serif;line-height:22px;height:22px;color:#00f;-webkit-text-stroke:0.4px #00f">Σ</div>
<div class="t" style="left:40px;top:78px;font:14.5px 'Liberation Serif',serif;line-height:18px;height:18px;color:#00f">Σ</div>
<div class="t" style="left:64px;top:78px;font:14.5px 'Liberation Serif',serif;line-height:18px;height:18px;color:#00f">Σ</div>
<div class="t" style="left:84px;top:78px;font:14.5px 'Liberation Serif',serif;line-height:18px;height:18px;color:#00f">Σ</div>
<div class="t" style="left:60px;top:81px;font-size:8.5px;line-height:12px">1</div>
<div class="t" style="left:93.5px;top:81px;font-size:8.5px;line-height:12px">1</div>
<div class="t" style="left:112px;top:80px;font-size:11.5px">(1)</div>
<div class="t" style="left:140px;top:80px;font-size:11.5px">1)</div>
<div class="t" style="left:158px;top:76px;font-size:10px;line-height:11px;letter-spacing:-0.5px">1.1</div>
<div class="t" style="left:157px;top:86px;font-size:10px;line-height:11px;letter-spacing:-0.5px">2.1</div>
<div class="t" style="left:180px;top:80px;font-size:10.5px;letter-spacing:-1px">(1)</div>
<div class="t" style="left:217px;top:82px;font:14px 'Liberation Sans',sans-serif;line-height:16px;color:#00f">Σ</div>
<div class="t" style="left:337px;top:57px;font:bold 6.500px 'Liberation Sans',sans-serif;line-height:8px;height:8px;color:#fff;letter-spacing:-0.2px">PDF</div>
<div class="t" style="left:476px;top:59px;font:bold 6.500px 'Liberation Sans',sans-serif;line-height:8px;height:8px;color:#fff;letter-spacing:-0.2px">PDF</div>
<div class="t" style="left:570px;top:60px;font:bold 6.500px 'Liberation Sans',sans-serif;line-height:8px;height:8px;color:#fff;letter-spacing:-0.2px">PDF</div>
<div class="t" style="left:1117px;top:52px;font:bold 16px 'Liberation Sans',sans-serif;line-height:18px;height:18px">x</div>
<div class="t" style="left:1127px;top:52px;font:bold 7px 'Liberation Sans',sans-serif;line-height:8px;height:8px;color:#2a4fb0">2</div>
<div class="t" style="left:1180px;top:51px;font:11px 'Liberation Sans',sans-serif;line-height:12px;height:12px;letter-spacing:-0.5px">ab</div>
<div class="t" style="left:1214px;top:50px;font:19px 'Liberation Serif',serif;line-height:18px;height:18px;color:#2a4fa8">A</div>
<svg class="a" style="left:340px;top:400px" width="380" height="500" viewBox="340 400 380 500" fill="none" stroke="#1212ff" stroke-width="1.3" stroke-linejoin="round" stroke-linecap="round"><ellipse cx="496.5" cy="844.0" rx="44.4" ry="46"/><ellipse cx="496.5" cy="844.0" rx="40.5" ry="42"/><ellipse cx="496.5" cy="844.0" rx="35.7" ry="37"/><ellipse cx="496.5" cy="844.0" rx="31.8" ry="33"/><path d="M472.0 858.0a29 29 0 0 0 50 0"/><path d="M477.0 860.0a26 26 0 0 0 42 -2"/><polygon fill="#fff" points="480.0,830.0 511.2,820.0 526.2,848.1 468.1,870.0"/><polygon fill="#fff" points="409.4,851.9 438.8,842.5 441.2,877.5 468.1,867.5 468.1,870.6 418.8,889.4"/><circle cx="495.6" cy="840.0" r="15" fill="#fff"/><circle cx="490.6" cy="838.1" r="1.1" fill="#1a1aff" stroke="none"/><circle cx="493.1" cy="838.8" r="1.1" fill="#1a1aff" stroke="none"/><circle cx="495.0" cy="840.0" r="1.1" fill="#1a1aff" stroke="none"/><circle cx="500.6" cy="837.2" r="1.1" fill="#1a1aff" stroke="none"/><circle cx="495.0" cy="844.4" r="1.1" fill="#1a1aff" stroke="none"/><circle cx="468.1" cy="838.1" r="7.5" fill="#fff"/><polygon stroke="none" fill="#fff" points="460.6,838.1 475.6,838.1 480.2,851.2 464.2,851.2"/><path d="M460.6 838.1L464.2 851.2M475.6 838.1L480.2 851.2"/><circle cx="472.2" cy="851.2" r="8" fill="#fff"/><circle cx="472.2" cy="852.2" r="4.5"/><circle cx="472.2" cy="852.8" r="1.6"/><circle cx="446.9" cy="840.0" r="8" fill="#fff"/><polygon stroke="none" fill="#fff" points="438.9,840.0 454.9,840.0 459.0,856.2 441.0,856.2"/><path d="M438.9 840.0L441.0 856.2M454.9 840.0L459.0 856.2"/><circle cx="450.0" cy="856.2" r="9" fill="#fff"/><circle cx="450.0" cy="857.2" r="5.6"/><circle cx="450.0" cy="857.8" r="2.5"/><polyline points="443.4,421.9 387.2,493.8"/><polyline points="444.1,423.4 387.8,494.7"/><polyline points="447.8,432.0 445.8,529.7"/><polyline points="448.9,433.6 447.7,530.5"/><polyline points="450.5,439.1 451.2,532.8"/><polyline points="452.5,437.5 455.2,532.8"/><polyline points="448.1,432.0 455.2,432.0"/><polyline points="455.2,432.0 491.9,525.0"/><polyline points="453.6,437.5 488.8,529.7"/><polyline points="455.2,441.4 482.8,525.0"/><polyline points="457.5,433.6 495.0,526.6"/><polyline points="454.4,479.7 467.7,473.4 455.6,482.8 471.6,491.4 455.6,500.0 477.8,493.8"/><polyline points="455.6,501.6 477.8,515.6 455.6,518.0 479.4,523.4 455.6,525.0 477.8,516.4"/><polyline points="477.8,493.8 471.6,509.4 484.8,525.0"/><polyline points="455.2,532.8 490.3,528.9"/><polyline points="455.2,535.2 493.4,532.0"/><polyline points="451.2,532.8 455.2,532.8"/><polyline points="393.4,497.7 451.2,532.8"/><polyline points="393.4,504.4 398.1,506.2 447.3,537.5"/><polyline points="396.6,502.3 448.1,535.2"/><polyline points="447.3,537.5 451.2,535.9 455.2,535.2"/><polyline points="457.5,415.6 648.0,473.2"/><polyline points="459.1,418.8 616.8,472.2"/><polyline points="616.8,472.2 619.7,472.2 619.7,477.1"/><polyline points="383.3,501.6 438.8,836.2"/><polyline points="389.5,505.0 458.8,823.8"/><polyline points="493.7,526.9 676.4,497.2"/><polyline points="495.6,533.8 673.4,500.2 676.4,497.2"/><polyline points="496.6,528.3 675.4,498.6"/><polyline points="525.9,491.2 648.0,474.2"/><polyline points="526.9,493.7 647.1,477.1"/><polyline points="525.9,491.2 493.7,526.9"/><polyline points="527.9,493.7 505.4,524.4"/><polyline points="648.0,474.2 653.9,473.6 658.8,478.1 675.4,497.2"/><polyline points="647.1,477.1 655.8,482.0 659.8,480.1"/><polyline points="535.7,494.3 522.0,521.1"/><polyline points="535.7,494.3 532.8,519.7"/><polyline points="535.7,494.3 548.4,517.2"/><polyline points="535.7,494.3 560.1,515.2"/><polyline points="565.0,490.0 548.4,517.2"/><polyline points="565.0,490.0 560.1,515.2"/><polyline points="565.0,490.0 575.7,512.7"/><polyline points="565.0,490.0 586.5,510.7"/><polyline points="591.4,486.5 575.7,512.7"/><polyline points="591.4,486.5 586.5,510.7"/><polyline points="591.4,486.5 599.2,508.8"/><polyline points="591.4,486.5 614.8,506.4"/><polyline points="618.7,482.0 599.2,508.8"/><polyline points="618.7,482.0 614.8,506.4"/><polyline points="618.7,482.0 626.5,504.1"/><polyline points="618.7,482.0 641.2,502.1"/><polyline points="646.1,478.1 626.5,504.1"/><polyline points="646.1,478.1 641.2,502.1"/><polyline points="646.1,478.1 654.9,499.6"/><polyline points="646.1,478.1 668.6,497.1"/><polyline points="660.7,482.0 669.1,610.0"/><polyline points="447.3,536.6 474.0,680.0 480.4,718.7"/><polyline points="451.2,535.6 477.5,680.0 486.9,731.6"/><polyline points="453.6,537.6 479.3,680.0 488.3,731.6"/><polyline points="456.1,537.6 481.0,680.0 489.8,730.4"/><polyline points="483.5,535.6 506.8,680.0 513.2,724.5"/><polyline points="486.4,535.6 509.1,680.0 515.0,724.5"/><polyline points="491.3,534.6 512.7,680.0 518.5,723.4"/><polyline points="495.2,533.7 516.8,680.0 522.0,718.7"/><polyline points="456.1,539.5 488.4,565.9"/><polyline points="460.0,557.1 487.4,537.6"/><polyline points="460.0,557.1 492.3,566.9"/><polyline points="462.0,567.9 493.2,565.9"/><polyline points="462.0,571.8 494.2,569.8"/><polyline points="463.9,580.5 495.2,576.6"/><polyline points="464.5,582.5 490.3,585.4"/><polyline points="467.9,600.1 490.3,585.4"/><polyline points="467.9,600.1 496.2,610.8"/><polyline points="468.8,603.0 498.1,607.9"/><polyline points="472.7,631.3 495.2,611.8"/><polyline points="472.7,632.3 502.0,638.2"/><polyline points="473.7,635.2 502.0,639.1"/><polyline points="477.6,656.7 500.1,640.1"/><polyline points="477.6,657.7 505.9,665.5"/><polyline points="480.5,674.3 505.9,664.5"/><polyline points="480.5,675.3 506.9,679.2"/><polyline points="482.5,683.1 506.9,679.2"/><polyline points="484.5,698.7 505.9,680.2"/><polyline points="485.4,699.7 511.8,703.6"/><polyline points="487.4,715.3 510.8,705.5"/><polyline points="488.4,537.6 494.2,553.2 488.8,565.9 497.1,578.6 492.7,586.4 500.1,607.9 495.2,611.8 503.0,637.2 500.1,640.1 506.9,665.5 505.9,680.2 510.8,703.6 511.8,715.3"/><polyline points="482.2,683.5 506.8,680.0"/><polyline points="483.9,695.2 507.4,681.2 485.7,698.8"/><polyline points="485.7,700.5 513.8,702.9 487.5,712.8"/><polyline points="488.0,715.2 509.1,708.1 489.8,725.1"/><polyline points="489.8,726.3 500.9,728.0"/><polyline points="510.3,691.7 515.0,703.4 511.5,708.1 516.2,718.7"/><polyline points="477.5,716.3 486.9,733.9 526.1,722.8 522.0,718.7"/><polyline points="487.5,732.2 522.0,723.6"/><polyline points="526.1,722.8 524.4,785.5"/><polyline points="522.6,725.1 520.9,784.3"/><polyline points="477.5,716.3 485.1,759.7 492.2,777.3"/><polyline points="480.4,721.0 488.0,762.0 492.7,773.8"/><polyline points="486.9,735.1 520.9,785.5"/><polyline points="490.4,735.1 522.0,780.8"/><polyline points="495.1,738.6 520.9,731.6"/><polyline points="499.8,745.6 516.2,740.4"/><polyline points="503.9,753.8 515.0,750.3"/><polyline points="493.3,751.5 496.3,769.1 520.9,762.0"/><polyline points="498.6,777.9 520.9,770.2"/><polyline points="520.9,731.6 512.1,764.4"/><polyline points="522.0,740.9 515.0,762.0"/><polyline points="526.7,722.2 533.2,764.4 530.2,797.2"/><polyline points="527.3,730.4 530.8,764.4 527.9,797.2"/><polyline points="524.4,785.5 532.6,771.4"/><polyline points="520.9,785.5 529.1,769.1"/><polyline points="492.2,777.3 520.9,786.1"/><polyline points="492.2,777.3 498.6,777.9"/><polyline points="492.7,773.8 492.2,777.3 491.6,782.0"/><polyline points="485.1,759.7 486.9,766.7 492.2,777.3"/><polyline points="498.6,784.3 517.3,790.2"/><polyline points="483.5,762.5 457.1,834.8"/><polyline points="487.0,767.4 462.0,834.8"/><polyline points="491.3,782.0 466.9,868.9"/><polyline points="495.2,784.0 470.8,868.0"/><polyline points="493.3,783.0 522.6,849.4"/><polyline points="497.6,784.0 526.5,845.5"/><polyline points="499.1,785.9 519.6,809.4"/><polyline points="501.1,784.0 521.6,785.9"/><polyline points="521.6,785.9 524.5,836.7"/><polyline points="525.5,785.9 528.4,844.5"/><polyline points="497.2,791.8 519.6,801.6"/><polyline points="505.0,793.8 520.6,817.2"/><polyline points="529.4,817.2 526.5,845.5"/><polyline points="526.5,817.2 523.6,842.6"/><polyline points="418.8,889.4 526.2,849.4"/><polyline points="418.1,886.2 468.1,867.5 523.8,848.1"/><polyline points="409.4,851.9 418.8,889.4"/><polyline points="411.9,855.0 417.5,878.8"/><polyline points="412.5,856.2 428.8,850.0"/><polyline points="428.1,845.6 440.0,877.5"/><polyline points="430.0,845.2 441.5,876.9"/><polyline points="417.5,878.8 437.5,872.5"/><polyline points="418.8,881.5 440.0,875.0"/><polyline points="423.8,880.0 425.0,884.4"/><polyline points="430.6,877.5 431.9,881.9"/><polyline points="409.4,851.9 412.5,856.2"/><circle cx="450.800" cy="421.900" r="7.800"/><circle cx="450.800" cy="421.500" r="5.500"/><rect x="448.300" y="419" width="5" height="4"/><circle cx="390.300" cy="500" r="4.200"/><circle cx="391" cy="501" r="1.400" fill="#1a1aff"/><path d="M384 497q-2 6 1 9"/><circle cx="496.600" cy="530.800" r="2"/><circle cx="496.600" cy="530.800" r=".8" fill="#1a1aff"/><circle cx="655.500" cy="479" r="3.200"/><path d="M671 612.500c-2-1.500-4 0-4 2s2 3.500 4 2" stroke-width="1.700"/></svg>
<svg class="a" style="left:0;top:936px" width="660" height="28" viewBox="0 936 660 28"><defs><linearGradient id="gg" x1="0" y1="0" x2="1" y2="1"><stop offset="0" stop-color="#a8e08a"/><stop offset="1" stop-color="#4a9a3a"/></linearGradient><linearGradient id="wa" x1="0" y1="0" x2="1" y2="0"><stop offset="0" stop-color="#6a9cf0"/><stop offset="1" stop-color="#1f4fb8"/></linearGradient><linearGradient id="pgg" x1="0" y1="0" x2="0" y2="1"><stop offset="0" stop-color="#fff"/><stop offset="1" stop-color="#b9c4e0"/></linearGradient></defs><path d="M91.500 941.500v11l2.500-2.500 2 4.500 2-1-2-4.500h3.500z" fill="#fff" stroke="#4a4a5a" stroke-width="1"/><path d="M204 943l11 10" stroke="#000" stroke-width="1.300"/><path d="M227.500 943l8 8" stroke="#000" stroke-width="1.300"/><path d="M238 954l-6-1.500 4.500-4.500z" fill="#000"/><rect x="248.500" y="943.500" width="15" height="11" fill="none" stroke="#000" stroke-width="1.200"/><ellipse cx="279" cy="949" rx="7.800" ry="5.500" fill="none" stroke="#111" stroke-width="1.100"/><rect x="294.500" y="942.500" width="14" height="12" fill="url(#pgg)" stroke="#8e9ab8"/><path d="M303 945.500h4.500M303 947.500h4.500M296 950.500h11.500M296 952.500h11.500" stroke="#8e9ab8" stroke-width="1"/><path d="M317 952l11-10.500h4.500v14.500h-4v-3.500h-5l-3 2.500zM326 949.500h3v-4z" fill="url(#wa)" stroke="#1f3f98" stroke-width=".5" fill-rule="evenodd"/><circle cx="342" cy="946.500" r="1.800" fill="#f0d020" stroke="#8a7a10" stroke-width=".5"/><circle cx="352" cy="946.500" r="1.800" fill="#e05030" stroke="#7a2a1a" stroke-width=".5"/><circle cx="347" cy="954.500" r="1.800" fill="#7a70e0" stroke="#3a3390" stroke-width=".5"/><path d="M344.500 943.500c1.500-1 3.500-1 5 0M352.500 950l-2 3M341.500 950l2 3.500" stroke="#44506a" stroke-width="1" fill="none"/><path d="M349 942l2 1.500-2 1.500zM350 954l.5-2.500 1.800 1.200zM342 954.500l2-.2-.8-2z" fill="#44506a"/><rect x="364.500" y="942.500" width="13" height="13" fill="#fff" stroke="#3a55a0"/><circle cx="371" cy="947" r="3" fill="#666" /><circle cx="370.300" cy="946.300" r="1.500" fill="#aaa"/><path d="M366 955c0-3.500 2-5 5-5s5 1.500 5 5z" fill="#e0701a"/><rect x="387.500" y="942.500" width="13" height="13" fill="#fff" stroke="#3a55a0"/><path d="M388 955v-4l4-4.500 3 3 2-2 3.500 3.500v4z" fill="#9ab0dc"/><path d="M388 951l4-4.500 3 3 2-2 3.500 3.500" stroke="#223" fill="none"/><circle cx="396.500" cy="946" r="1.800" fill="#f07a1a" stroke="#f8c060" stroke-width=".6"/><path d="M418 947l5.500-5 5.500 5.500-5.500 5z" fill="#f4f6fb" stroke="#55607a" stroke-width="1"/><path d="M423 941v5" stroke="#55607a"/><path d="M429 947.500c1.500.5 2 2 1.500 4.500-1-1.500-2-2-2.500-3.500z" fill="#2a5ac8"/><rect x="415" y="953" width="16" height="4" fill="#ffff00"/><path d="M461 941.500l2.500 1.500-3 4-2-1z" fill="#e8b020" stroke="#8a6a14" stroke-width=".5"/><path d="M458.500 946l2 1.200c-1 2.500-3 4-8 4.300 2.500-1.500 4-3 6-5.500z" fill="#6a90e0" stroke="#2a4a9a" stroke-width=".6"/><rect x="449" y="950" width="3" height="2" fill="#2a4ab0"/><rect x="449" y="953" width="16" height="4" fill="#0000ff"/><rect x="483" y="953" width="16" height="4" fill="#000"/><rect x="517" y="944" width="15" height="1" fill="#000"/><rect x="517" y="946.500" width="15" height="2.500" fill="#000"/><rect x="517" y="951" width="15" height="3.200" fill="#000"/><rect x="540" y="944" width="15" height="1" fill="#000"/><path d="M540 947.500h15" stroke="#000" stroke-width="1" stroke-dasharray="1 1"/><path d="M540 950.500h15" stroke="#000" stroke-width="1" stroke-dasharray="3 1"/><path d="M540 953.500h15" stroke="#000" stroke-width="1" stroke-dasharray="3 2 1 2"/><path d="M563 943.500h13M565 948.500h13M565 954h11" stroke="#000" stroke-width="1"/><path d="M578 943.500l-4-2.500v5zM563 948.500l4-2.500v5zM563 954l4-2.500v5zM578 954l-4-2.500v5z" fill="#000"/><rect x="589" y="944" width="10.500" height="10.500" fill="#4a5a4a" opacity=".6"/><rect x="587.500" y="942.500" width="10" height="10" fill="url(#gg)" stroke="#3a7a2a" stroke-width=".8"/><path d="M610.500 945.500l3-3h10v10l-3 3.500h-10z" fill="#5aa04a" stroke="#2f6a22" stroke-width=".8"/><rect x="610.500" y="945.500" width="10" height="10" fill="url(#gg)" stroke="#3a7a2a" stroke-width=".8"/><path d="M620.500 945.500l3-3" stroke="#2f6a22" stroke-width=".8"/><rect x="634" y="952" width="6" height="1" fill="#000"/><rect x="635" y="953" width="6" height="1" fill="#fff"/><path d="M635 956h6l-3 3z" fill="#fff"/><path d="M634 955h6l-3 3z" fill="#000"/></svg>
<div class="t" style="left:296px;top:942px;font:bold 8px 'Liberation Sans',sans-serif;line-height:8px;height:8px;color:#111">A</div>
<div class="t" style="left:485px;top:938px;font:bold 17px 'Liberation Serif',serif;line-height:18px;height:18px;color:#2a4fa8">A</div>
</body></html>
